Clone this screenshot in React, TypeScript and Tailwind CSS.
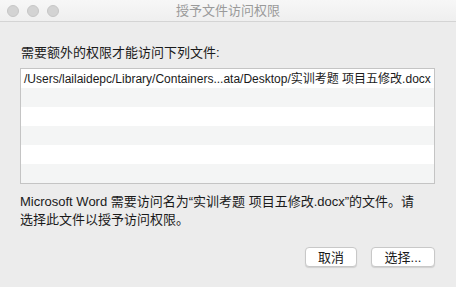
import React from 'react'

const font = { fontFamily: '"Liberation Sans", "Noto Sans CJK SC", sans-serif' }

export default function App() {
  const rows = [
    '/Users/lailaidepc/Library/Containers...ata/Desktop/实训考题 项目五修改.docx',
    '',
    '',
    '',
    '',
    '',
  ]

  return (
    <div
      className="w-[456px] h-[287px] bg-[#ececec] flex flex-col overflow-hidden text-[#1a1a1a]"
      style={font}
    >
      {/* Title bar */}
      <div className="relative h-[22px] flex items-center justify-center bg-gradient-to-b from-[#f7f7f7] to-[#efefef] border-b border-[#d4d4d4]">
        <div className="absolute left-[7px] top-[5px] flex gap-[8px]">
          <span className="w-[12px] h-[12px] rounded-full bg-[#d3d3d3] border border-[#c6c6c6]" />
          <span className="w-[12px] h-[12px] rounded-full bg-[#d3d3d3] border border-[#c6c6c6]" />
          <span className="w-[12px] h-[12px] rounded-full bg-[#d3d3d3] border border-[#c6c6c6]" />
        </div>
        <span className="text-[13px] text-[#9a9a9a]">授予文件访问权限</span>
      </div>

      <div className="flex flex-col px-[20px] pt-[23px]">
        <p className="text-[13px] leading-[16px] pl-[1px]">需要额外的权限才能访问下列文件:</p>

        {/* File list */}
        <div className="mt-[7px] w-[415px] border border-[#c4c4c4] bg-white flex flex-col">
          {rows.map((row, i) => (
            <div
              key={i}
              className={`h-[19px] flex items-center px-[3px] text-[12px] whitespace-nowrap ${
                i % 2 === 1 ? 'bg-[#f4f5f5]' : 'bg-white'
              }`}
            >
              {row}
            </div>
          ))}
        </div>

        <p className="mt-[9px] text-[13px] leading-[18px] whitespace-nowrap">
          Microsoft Word 需要访问名为“实训考题 项目五修改.docx”的文件。请
          <br />
          选择此文件以授予访问权限。
        </p>

        {/* Buttons */}
        <div className="mt-[18px] flex justify-end gap-[14px] pr-[1px]">
          <button className="w-[52px] h-[20px] rounded-[4px] bg-white border border-[#c8c8c8] shadow-[0_1px_1px_rgba(0,0,0,0.12)] text-[13px] leading-none">
            取消
          </button>
          <button className="w-[64px] h-[20px] rounded-[4px] bg-white border border-[#c8c8c8] shadow-[0_1px_1px_rgba(0,0,0,0.12)] text-[13px] leading-none">
            选择...
          </button>
        </div>
      </div>
    </div>
  )
}
